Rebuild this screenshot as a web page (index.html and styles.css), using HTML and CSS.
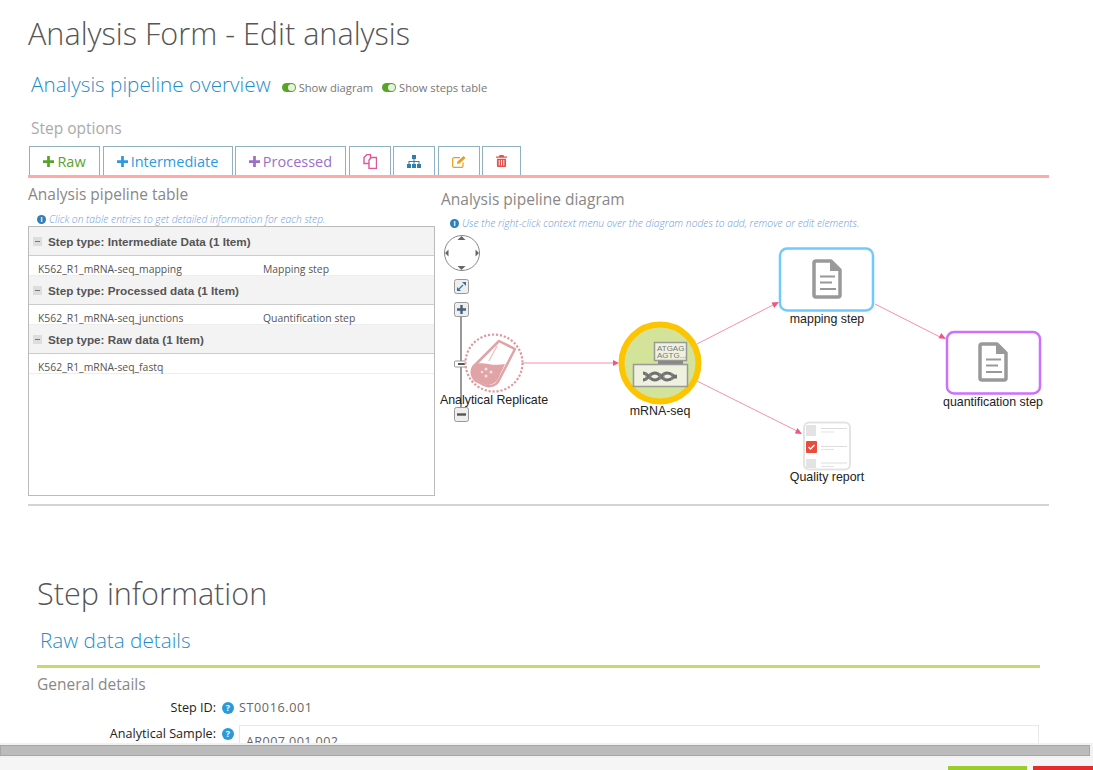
FILE: index.html
```html
<!DOCTYPE html>
<html lang="en">
<head>
    <meta charset="UTF-8">
    <meta name="viewport" content="width=device-width, initial-scale=1.0">
    <title>Analysis Form - Edit analysis</title>
    <link rel="stylesheet" href="styles.css">
</head>
<body>

    <main class="page">
        <h1 class="page-title">Analysis Form - Edit analysis</h1>

        <div class="overview-head">
            <h2 class="blue-title">Analysis pipeline overview</h2>
            <span class="toggle"><i class="switch"></i>Show diagram</span>
            <span class="toggle"><i class="switch"></i>Show steps table</span>
        </div>

        <h3 class="grey-title options-title">Step options</h3>
        <div class="tabs">
            <button class="tab tab-raw"><svg class="plus" viewBox="0 0 12 12"><path d="M4.5 0h3v4.500h4.500v3h-4.500v4.500h-3v-4.500h-4.500v-3h4.500z"/></svg>Raw</button>
            <button class="tab tab-inter"><svg class="plus" viewBox="0 0 12 12"><path d="M4.500 0h3v4.500h4.500v3h-4.500v4.500h-3v-4.500h-4.500v-3h4.500z"/></svg>Intermediate</button>
            <button class="tab tab-proc"><svg class="plus" viewBox="0 0 12 12"><path d="M4.500 0h3v4.500h4.500v3h-4.500v4.500h-3v-4.500h-4.500v-3h4.500z"/></svg>Processed</button>
            <button class="tab tab-icon">
                <svg viewBox="0 0 14 15" width="14" height="15" fill="#fff" stroke="#e0569b" stroke-width="1.400"><path d="M1 3.500l3-3h3.500v9h-6.500z"/><path d="M6 6l2.500-2.500h5v11h-7.500z"/></svg>
            </button>
            <button class="tab tab-icon">
                <svg viewBox="0 0 14 13" width="14" height="13" fill="#2f7fa8"><rect x="5" y="0" width="4" height="4"/><rect x="0" y="9" width="4" height="4"/><rect x="5" y="9" width="4" height="4"/><rect x="10" y="9" width="4" height="4"/><path d="M6.500 4h1v2h5v3h-1v-2h-4v2h-1v-2h-4v2h-1v-3h5z"/></svg>
            </button>
            <button class="tab tab-icon">
                <svg viewBox="0 0 14 13" width="14" height="13" fill="none" stroke="#eb9d1c" stroke-width="1.200"><path d="M11 7.500v3.500a1.300 1.300 0 0 1-1.300 1.300h-7.700a1.300 1.300 0 0 1-1.300-1.300v-7a1.300 1.300 0 0 1 1.300-1.300h6"/><path d="M5 9l.5-2.500 6-5.500 2 2-6 5.500z" fill="#eb9d1c" stroke="none"/></svg>
            </button>
            <button class="tab tab-icon tab-trash">
                <svg viewBox="0 0 12 13" width="11" height="12" fill="#e3524f"><path d="M4 0h4l1 1.500h3v1.500h-12v-1.500h3z"/><path d="M1 4h10v8a1 1 0 0 1-1 1h-8a1 1 0 0 1-1-1zM3 5.500v6h1v-6zM5.500 5.500v6h1v-6zM8 5.500v6h1v-6z" fill-rule="evenodd"/></svg>
            </button>
        </div>

        <div class="pipeline">
            <section class="table-panel">
                <h3 class="grey-title">Analysis pipeline table</h3>
                <p class="hint"><i class="info">i</i>Click on table entries to get detailed information for each step.</p>
                <div class="steps-table">
                    <div class="group-row"><i class="collapse"></i>Step type: Intermediate Data (1 Item)</div>
                    <div class="step-row"><span>K562_R1_mRNA-seq_mapping</span><span>Mapping step</span></div>
                    <div class="group-row"><i class="collapse"></i>Step type: Processed data (1 Item)</div>
                    <div class="step-row"><span>K562_R1_mRNA-seq_junctions</span><span>Quantification step</span></div>
                    <div class="group-row"><i class="collapse"></i>Step type: Raw data (1 Item)</div>
                    <div class="step-row"><span>K562_R1_mRNA-seq_fastq</span><span></span></div>
                </div>
            </section>

            <section class="diagram-panel">
                <h3 class="grey-title">Analysis pipeline diagram</h3>
                <p class="hint"><i class="info">i</i>Use the right-click context menu over the diagram nodes to add, remove or edit elements.</p>
                <svg class="diagram" viewBox="436 232 613 266" width="613" height="266">
                    <defs>
                        <g id="doc">
                            <path d="M2 0h15l9 9v25a2 2 0 0 1-2 2h-22a2 2 0 0 1-2-2v-32a2 2 0 0 1 2-2z" fill="#fff" stroke="#999" stroke-width="3.500" stroke-linejoin="round"/>
                            <path d="M16 0l10 10h-10z" fill="#999"/>
                            <path d="M6 15.500h15M6 21.500h12M6 28h16" stroke="#999" stroke-width="2.200" fill="none"/>
                        </g>
                    </defs>

                    <g class="edges">
                        <path d="M523 363H613"/>
                        <path d="M697 344L773 305"/>
                        <path d="M875 304L940 337"/>
                        <path d="M697 381L797 431"/>
                    </g>
                    <g fill="#f2557f">
                        <path d="M619 363l-6-3v6z"/>
                        <path d="M779 302l-7.500 .5 2.800 5.500z"/>
                        <path d="M946 339l-7.500 -.8 2.800 -5.300 z"/>
                        <path d="M802 434l-4.500-6-2.700 5.400z"/>
                    </g>

                    <!-- pan and zoom controls -->
                    <circle cx="462" cy="253" r="17.500" fill="#fff" stroke="#888"/>
                    <g fill="#666">
                        <path d="M461.500 236l4 4h-8zM461.500 270l4-4h-8zM445 253l3.500-3.500v7zM479 253l-3.500-3.500v7z"/>
                    </g>
                    <rect x="454.500" y="279.500" width="14" height="14" rx="2" fill="#eee" stroke="#999"/>
                    <path d="M459 289l4-4" stroke="#2f7fa8" stroke-width="1.300"/>
                    <path d="M466 282v4l-4-4zM457 291v-4l4 4z" fill="#3b6f96"/>
                    <path d="M461 317V408" stroke="#999" stroke-width="2"/>
                    <rect x="454.500" y="302.500" width="14" height="14" rx="2" fill="#eee" stroke="#999"/>
                    <path d="M461.500 305v9M457 309.500h9" stroke="#46617c" stroke-width="2.400"/>
                    <rect x="454.500" y="361" width="14" height="6" rx="1" fill="#fff" stroke="#999"/>
                    <path d="M458 364h7" stroke="#555" stroke-width="2"/>
                    <rect x="454.500" y="407.500" width="14" height="14" rx="2" fill="#eee" stroke="#999"/>
                    <path d="M457 414.500h9" stroke="#555" stroke-width="2.400"/>

                    <!-- analytical replicate -->
                    <circle cx="494" cy="363" r="28.500" fill="#fff" stroke="#dc9a9e" stroke-width="2.200" stroke-dasharray="2.200 1.800"/>
                    <path d="M499 341l16 8-16 31a11 11 0 0 1-15 5l-6-3a11 11 0 0 1-5-15z" fill="#fff" stroke="#e0a4a6" stroke-width="2.500" stroke-linejoin="round"/>
                    <path d="M474 365c8-5 16 2 31-1l-7 15a11 11 0 0 1-14 5l-6-3a11 11 0 0 1-4-16z" fill="#e0a4a6"/>
                    <path d="M497 346l-8 15" stroke="#eec5c6" stroke-width="1.500"/>
                    <g fill="#fff" opacity=".7"><circle cx="486" cy="369" r="1.500"/><circle cx="491" cy="372" r="1.500"/><circle cx="486" cy="376" r="1.500"/><circle cx="482" cy="372" r="1.200"/></g>

                    <!-- mrna-seq -->
                    <circle cx="660" cy="363" r="38.500" fill="#d3e39a" stroke="#fdc500" stroke-width="6"/>
                    <rect x="654.500" y="342.500" width="32" height="18" fill="#eef1de" stroke="#999" stroke-width="1.500"/>
                    <rect x="658" y="361" width="25" height="3" fill="#888"/>
                    <text class="seq-text" x="657" y="351">ATGAG</text>
                    <text class="seq-text" x="657" y="358">AGTG...</text>
                    <rect x="633.500" y="364.500" width="54" height="22" fill="#eef1de" stroke="#999" stroke-width="1.500"/>
                    <path d="M643 373c5 0 6 7 12 7s6-7 12-7 6 4 10 4M643 380c5 0 6-7 12-7s6 7 12 7 6-4 10-4" stroke="#6f6f6f" stroke-width="3" fill="none"/>
                    <path d="M646 372v9M650 373v7M660 373v7M664 373v7M672 373v7" stroke="#8a8a8a" stroke-width="1"/>

                    <!-- steps -->
                    <rect x="780" y="248.500" width="93" height="62" rx="7" fill="#fff" stroke="#6ecbff" stroke-width="2.500"/>
                    <use href="#doc" x="814" y="261"/>
                    <rect x="947" y="332" width="93" height="61.500" rx="7" fill="#fff" stroke="#cc70ff" stroke-width="2.500"/>
                    <use href="#doc" x="980" y="344"/>

                    <!-- quality report -->
                    <rect x="804" y="422.500" width="46" height="47" rx="5" fill="#fff" stroke="#e3e3e3" stroke-width="2"/>
                    <rect x="806" y="425" width="10" height="11" fill="#e3e3e3"/>
                    <rect x="806" y="441" width="11" height="12" rx="1" fill="#e74c3c"/>
                    <path d="M808.500 447l2 2 4-4" stroke="#fff" stroke-width="1.500" fill="none"/>
                    <rect x="806" y="459" width="10" height="9" fill="#e3e3e3"/>
                    <path d="M821 428.500h26M821 446.500h26M821 463h26" stroke="#ddd" stroke-width="1.200"/>
                    <path d="M821 432h13M821 449.500h13M821 466.500h13" stroke="#e3e3e3" stroke-width="1.200"/>

                    <g class="node-labels">
                        <text x="494" y="404">Analytical Replicate</text>
                        <text x="660" y="415">mRNA-seq</text>
                        <text x="827" y="323">mapping step</text>
                        <text x="993" y="406">quantification step</text>
                        <text x="827" y="481">Quality report</text>
                    </g>
                </svg>
            </section>
        </div>

        <h1 class="page-title info-title">Step information</h1>
        <h2 class="blue-title details-title">Raw data details</h2>
        <h3 class="grey-title general-title">General details</h3>

        <div class="form-row">
            <label>Step ID:</label><i class="help">?</i><span class="value">ST0016.001</span>
        </div>
        <div class="form-row sample-row">
            <label>Analytical Sample:</label><i class="help">?</i><div class="field">AR007.001.002</div>
        </div>
    </main>

    <div class="scrollbar"><div class="thumb"></div></div>

    <footer class="actions">
        <span class="action-save"></span>
        <span class="action-cancel"></span>
    </footer>

</body>
</html>
```

FILE: styles.css
```css
html, body {
    margin: 0;
    padding: 0;
    height: 100%;
}

body {
    font-family: "Open Sans", Arial, sans-serif;
    background-color: #fff;
    color: #555;
    display: flex;
    flex-direction: column;
    height: 770px;
    overflow: hidden;
}

.page {
    flex: 0 0 743px;
    height: 743px;
    overflow: hidden;
    box-sizing: border-box;
    padding: 0 44px 0 28px;
}

h1, h2, h3, p {
    margin: 0;
    font-weight: 300;
}

.page-title {
    font-size: 30.600px;
    line-height: 40px;
    margin-top: 13px;
    color: #555;
}

.blue-title {
    font-size: 20.700px;
    line-height: 30px;
    color: #1f8dc9;
}

.grey-title {
    font-size: 15.500px;
    line-height: 22px;
    font-weight: 400;
    color: #888;
}

.overview-head {
    display: flex;
    align-items: center;
    margin: 16px 0 0 3px;
    height: 30px;
}

.toggle {
    display: flex;
    align-items: center;
    font-size: 11.200px;
    color: #777;
    margin: 6px 0 0 9px;
}

.overview-head .blue-title {
    margin-right: 2px;
}

.switch {
    display: inline-block;
    position: relative;
    width: 14px;
    height: 9px;
    border-radius: 5px;
    background-color: #5aa32a;
    margin-right: 3px;
}

.switch::after {
    content: "";
    position: absolute;
    right: 1px;
    top: 1px;
    width: 7px;
    height: 7px;
    border-radius: 50%;
    background-color: #e6f2de;
}

.options-title {
    color: #aaa;
    margin: 18px 0 0 3px;
}

.tabs {
    display: flex;
    gap: 2.500px;
    margin-top: 7px;
    padding-left: 1px;
    height: 29px;
    border-bottom: 3px solid #ffa9a9;
}

.tab {
    display: flex;
    align-items: center;
    justify-content: center;
    box-sizing: border-box;
    height: 29px;
    background-color: #fff;
    border: 1px solid #8fb1c2;
    border-bottom: none;
    font-family: inherit;
    font-size: 14.500px;
    padding: 0;
}

.plus {
    width: 11px;
    height: 11px;
    margin-right: 3px;
}

.tab-raw { width: 71px; color: #5aa32a; }
.tab-raw .plus { fill: #5aa32a; }
.tab-inter { width: 130px; color: #2d9adf; }
.tab-inter .plus { fill: #2d9adf; }
.tab-proc { width: 111px; color: #9b6fc8; }
.tab-proc .plus { fill: #9b6fc8; }
.tab-icon { width: 42px; }
.tab-trash { width: 39px; }

.pipeline {
    display: flex;
    height: 328px;
    border-bottom: 2px solid #d4d4d4;
    box-sizing: border-box;
}

.table-panel {
    width: 407px;
    flex: none;
    padding-top: 5px;
}

.diagram-panel {
    flex: 1;
    padding-top: 10px;
    min-width: 0;
    margin-left: 1px;
}

.diagram-panel .grey-title {
    margin-left: 5px;
}

.diagram-panel .hint {
    margin: 7px 0 2px 14px;
}

.diagram {
    display: block;
    margin-top: 1px;
    overflow: visible;
}

.hint {
    font-size: 10.300px;
    font-style: italic;
    line-height: 13px;
    color: #6c9bd8;
    margin: 8px 0 0 9px;
    display: flex;
    align-items: center;
}

.info {
    display: inline-block;
    width: 9px;
    height: 9px;
    line-height: 9px;
    margin-right: 3px;
    border-radius: 50%;
    background-color: #2f7fb8;
    color: #fff;
    font-size: 7px;
    font-weight: 700;
    font-style: normal;
    text-align: center;
}

.steps-table {
    border: 1px solid #bbb;
    height: 268px;
}

.group-row {
    display: flex;
    align-items: center;
    height: 28px;
    background-color: #f3f3f3;
    border-bottom: 1px solid #ccc;
    font-family: "Liberation Sans", Arial, sans-serif;
    font-size: 11.700px;
    font-weight: 700;
    color: #555;
    padding-left: 4px;
}

.collapse {
    position: relative;
    width: 9px;
    height: 9px;
    background-color: #ddd;
    margin-right: 6px;
}

.collapse::after {
    content: "";
    position: absolute;
    left: 2px;
    top: 4px;
    width: 5px;
    height: 1px;
    background-color: #777;
}

.step-row {
    display: flex;
    align-items: flex-end;
    height: 19px;
    border-bottom: 1px solid #eee;
    font-size: 10.400px;
    line-height: 11px;
    color: #555;
    padding-left: 9px;
}

.step-row span {
    display: block;
}

.step-row span:first-child {
    width: 225px;
}

.info-title {
    margin-top: 67px;
    padding-left: 9px;
    line-height: 40px;
}

.details-title {
    margin: 12px 0 0 12px;
    line-height: 30px;
    padding-bottom: 10px;
}

.general-title {
    margin: 0 9px;
    padding-top: 5px;
    border-top: 3px solid #c5da6b;
    width: 1003px;
}

.form-row {
    display: flex;
    align-items: flex-start;
    font-size: 12.600px;
    line-height: 16px;
    margin-top: 5px;
}

.form-row label {
    width: 188px;
    text-align: right;
    color: #222;
    flex: none;
}

.help {
    flex: none;
    width: 12px;
    height: 12px;
    line-height: 12px;
    margin: 2px 5px 0 6px;
    border-radius: 50%;
    background-color: #2a9bd8;
    color: #fff;
    font-size: 9px;
    font-weight: 700;
    font-style: normal;
    text-align: center;
}

.value {
    letter-spacing: .6px;
    color: #666;
}

.sample-row {
    margin-top: 10px;
}

.field {
    box-sizing: border-box;
    width: 800px;
    height: 40px;
    border: 1px solid #e8e8e8;
    margin-top: -1px;
    padding: 8px 6px;
    letter-spacing: .4px;
    color: #666;
}

.edges path {
    fill: none;
    stroke: #f68fab;
    stroke-width: 1;
}

.node-labels text {
    font-family: "Liberation Sans", Arial, sans-serif;
    font-size: 12.400px;
    text-anchor: middle;
    fill: #222;
}

.seq-text {
    font-family: "Liberation Sans", Arial, sans-serif;
    font-size: 8px;
    fill: #777;
}

.scrollbar {
    flex: 0 0 15px;
    box-sizing: border-box;
    padding: 2px 3px 2px 0;
    background-color: #f1f1f1;
}

.thumb {
    height: 11px;
    box-sizing: border-box;
    background-color: #bbb;
    border: 1px solid #a6a6a6;
}

.actions {
    flex: 1;
    display: flex;
    justify-content: flex-end;
    gap: 6px;
    align-items: flex-start;
    padding-top: 8px;
    background-color: #f5f5f5;
}

.action-save {
    width: 79px;
    height: 20px;
    background-color: #9acd2a;
}

.action-cancel {
    width: 60px;
    height: 20px;
    background-color: #e52b2b;
}
```
